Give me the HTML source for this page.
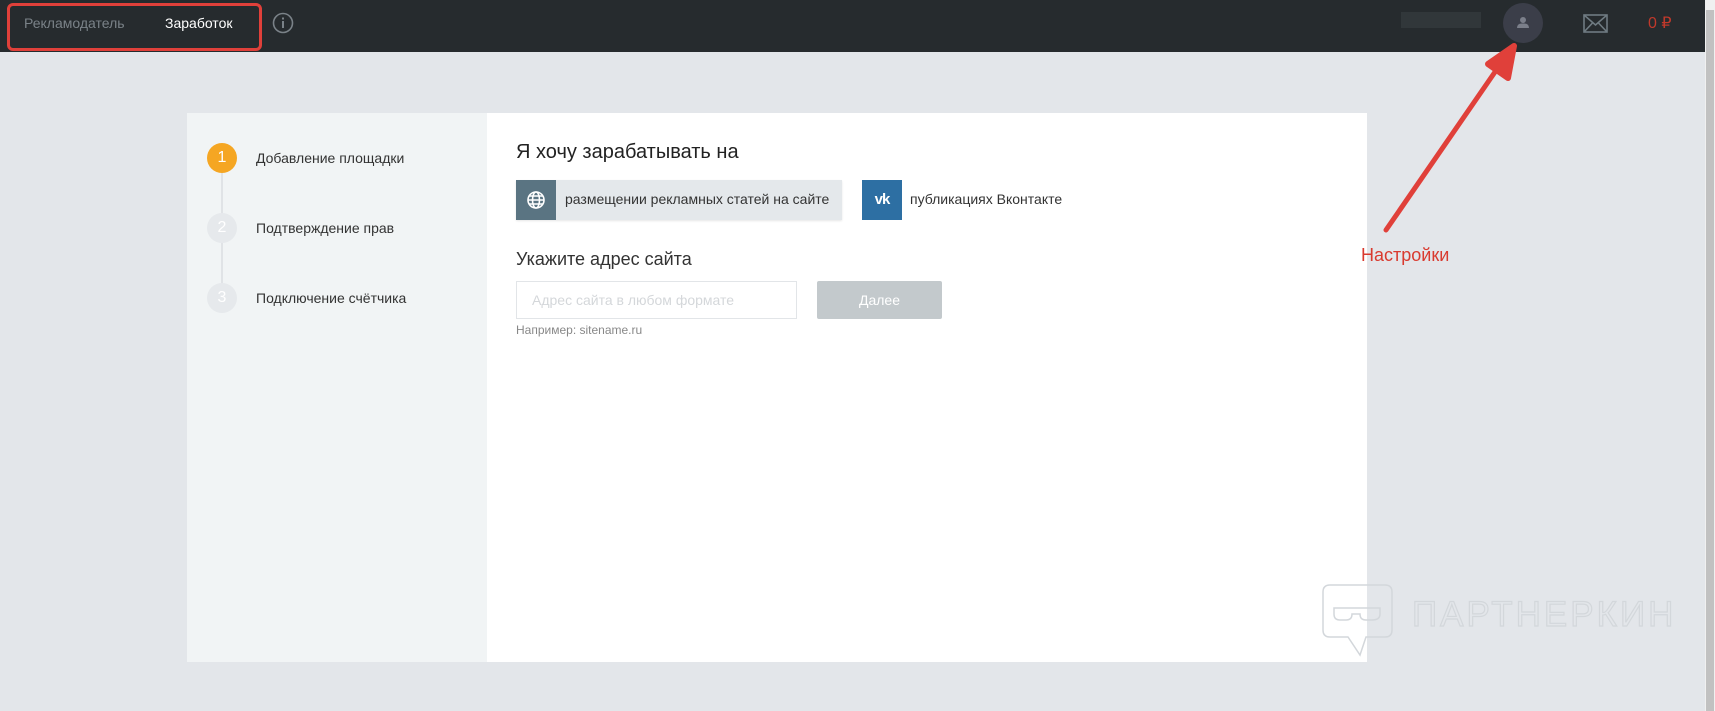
<!DOCTYPE html>
<html><head><meta charset="utf-8"><style>
*{margin:0;padding:0;box-sizing:border-box}
body{width:1715px;height:711px;overflow:hidden;background:#e3e6ea;font-family:"Liberation Sans","DejaVu Sans",sans-serif;position:relative}
.a{position:absolute}
</style></head><body>
<div class="a" style="left:0;top:0;width:1705px;height:52px;background:#262b2e"></div>
<div class="a" style="left:7px;top:3px;width:255px;height:48px;border:3px solid #e0403a;border-radius:6px"></div>
<div class="a" style="left:24px;top:15px;font-size:14px;color:#7a8288">Рекламодатель</div>
<div class="a" style="left:165px;top:15px;font-size:14px;color:#fff">Заработок</div>
<svg class="a" style="left:272px;top:12px" width="22" height="22"><circle cx="11" cy="11" r="9.5" fill="none" stroke="#7a8288" stroke-width="1.6"/><rect x="10" y="9" width="2" height="7" fill="#7a8288"/><rect x="10" y="5.5" width="2" height="2" fill="#7a8288"/></svg>
<div class="a" style="left:1401px;top:12px;width:80px;height:16px;background:#31373a"></div>
<div class="a" style="left:1503px;top:3px;width:40px;height:40px;border-radius:50%;background:#3b3e49"></div>
<svg class="a" style="left:1517px;top:16px" width="12" height="13"><circle cx="6" cy="4" r="3" fill="#7b7f8a"/><path d="M0 12 Q0 7 6 7.5 Q12 7 12 12Z" fill="#7b7f8a"/></svg>
<svg class="a" style="left:1583px;top:14px" width="25" height="19"><rect x="1" y="1" width="23" height="17" fill="none" stroke="#6f7b82" stroke-width="1.6"/><path d="M1 1 L12.5 11 L24 1 M1 18 L9.5 9 M24 18 L15.5 9" fill="none" stroke="#6f7b82" stroke-width="1.6"/></svg>
<div class="a" style="left:1648px;top:13px;font-size:16px;color:#c0392b">0 ₽</div>
<div class="a" style="left:1705px;top:0;width:10px;height:711px;background:#f0f0f0"></div>
<div class="a" style="left:1706px;top:10px;width:8px;height:701px;background:#c1c1c1"></div>

<div class="a" style="left:187px;top:113px;width:1180px;height:549px;background:#fff"></div>
<div class="a" style="left:187px;top:113px;width:300px;height:549px;background:#f1f4f5"></div>
<div class="a" style="left:221px;top:158px;width:2px;height:140px;background:#e0e3e6"></div>
<div class="a" style="left:207px;top:143px;width:30px;height:30px;border-radius:50%;background:#f5a623;color:#fff;font-size:16px;text-align:center;line-height:30px">1</div>
<div class="a" style="left:207px;top:213px;width:30px;height:30px;border-radius:50%;background:#e6e9ec;color:#fff;font-size:16px;text-align:center;line-height:30px">2</div>
<div class="a" style="left:207px;top:283px;width:30px;height:30px;border-radius:50%;background:#e6e9ec;color:#fff;font-size:16px;text-align:center;line-height:30px">3</div>
<div class="a" style="left:256px;top:150px;font-size:14px;color:#333">Добавление площадки</div>
<div class="a" style="left:256px;top:220px;font-size:14px;color:#333">Подтверждение прав</div>
<div class="a" style="left:256px;top:290px;font-size:14px;color:#333">Подключение счётчика</div>

<div class="a" style="left:516px;top:141px;font-size:20px;color:#222">Я хочу зарабатывать на</div>
<div class="a" style="left:516px;top:180px;width:326px;height:40px;background:#e4e8eb;box-shadow:0 1px 2px rgba(0,0,0,.1)"></div>
<div class="a" style="left:516px;top:180px;width:40px;height:40px;background:#5a7482"></div>
<svg class="a" style="left:526px;top:190px" width="20" height="20"><g fill="none" stroke="#fff" stroke-width="1.6"><circle cx="10" cy="10" r="8"/><ellipse cx="10" cy="10" rx="3.5" ry="8"/><path d="M2 10H18M3.5 6H16.5M3.5 14H16.5"/></g></svg>
<div class="a" style="left:565px;top:191px;font-size:14px;color:#333">размещении рекламных статей на сайте</div>
<div class="a" style="left:862px;top:180px;width:40px;height:40px;background:#2d6fa3;color:#fff;font-weight:bold;font-size:15px;text-align:center;line-height:40px;letter-spacing:-1px">vk</div>
<div class="a" style="left:910px;top:191px;font-size:14px;color:#333">публикациях Вконтакте</div>

<div class="a" style="left:516px;top:249px;font-size:18px;color:#333">Укажите адрес сайта</div>
<div class="a" style="left:516px;top:281px;width:281px;height:38px;border:1px solid #e2e5e8;background:#fff;font-size:14px;color:#d4d7da;padding:10px 0 0 15px">Адрес сайта в любом формате</div>
<div class="a" style="left:817px;top:281px;width:125px;height:38px;background:#c3c9cc;border-radius:2px;color:#fff;font-size:14px;text-align:center;line-height:38px">Далее</div>
<div class="a" style="left:516px;top:323px;font-size:12px;color:#888">Например: sitename.ru</div>

<svg class="a" style="left:1300px;top:40px" width="240" height="220"><path d="M86 190 L206 16" stroke="#e0403a" stroke-width="5" stroke-linecap="round"/><path d="M214 6 L188 24 L208 38Z" fill="#e0403a" stroke="#e0403a" stroke-width="6" stroke-linejoin="round"/></svg>
<div class="a" style="left:1361px;top:245px;font-size:18px;color:#d93a2f">Настройки</div>

<svg class="a" style="left:1320px;top:580px" width="360" height="80"><g fill="none" stroke="#d3d7db" stroke-width="1.5"><path d="M10 5 H65 Q72 5 72 12 V50 Q72 57 65 57 H46 L40 75 L28 57 H10 Q3 57 3 50 V12 Q3 5 10 5Z"/><path d="M14 28 H60 V34 Q60 40 52 40 H46 Q40 40 40 34 H32 Q32 40 26 40 H20 Q14 40 14 34Z"/></g><text x="92" y="46" font-family="Liberation Sans" font-size="35" fill="none" stroke="#d3d7db" stroke-width="1.2" letter-spacing="3">ПАРТНЕРКИН</text></svg>
</body></html>
